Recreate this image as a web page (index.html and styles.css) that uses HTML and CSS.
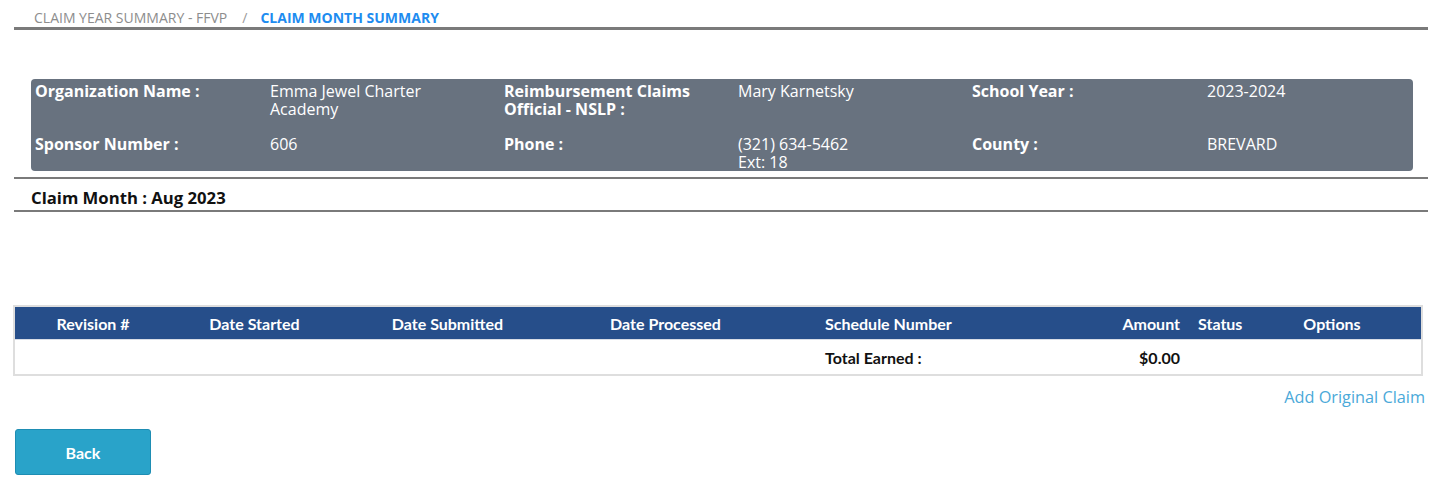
FILE: index.html
```html
<!DOCTYPE html>
<html lang="en">
<head>
<meta charset="utf-8">
<title>Claim Month Summary</title>
<link rel="stylesheet" href="styles.css">
</head>
<body>
<div class="page">
  <nav class="crumbs">
    <a class="crumb" href="#">CLAIM YEAR SUMMARY - FFVP</a>
    <span class="sep">/</span>
    <span class="crumb current">CLAIM MONTH SUMMARY</span>
  </nav>

  <section class="info">
    <div class="info-row">
      <div class="lbl">Organization Name :</div>
      <div class="val">Emma Jewel Charter Academy</div>
      <div class="lbl">Reimbursement Claims Official - NSLP :</div>
      <div class="val">Mary Karnetsky</div>
      <div class="lbl">School Year :</div>
      <div class="val">2023-2024</div>
    </div>
    <div class="info-row">
      <div class="lbl">Sponsor Number :</div>
      <div class="val">606</div>
      <div class="lbl">Phone :</div>
      <div class="val"><div>(321) 634-5462</div><div>Ext: 18</div></div>
      <div class="lbl">County :</div>
      <div class="val">BREVARD</div>
    </div>
  </section>

  <div class="month">Claim Month : Aug 2023</div>

  <div class="table">
    <div class="thead">
      <div class="c c1">Revision #</div>
      <div class="c c2">Date Started</div>
      <div class="c c3">Date Submitted</div>
      <div class="c c4">Date Processed</div>
      <div class="c c5">Schedule Number</div>
      <div class="c c6">Amount</div>
      <div class="c c7">Status</div>
      <div class="c c8">Options</div>
    </div>
    <div class="trow">
      <div class="c c1"></div>
      <div class="c c2"></div>
      <div class="c c3"></div>
      <div class="c c4"></div>
      <div class="c c5">Total Earned :</div>
      <div class="c c6">$0.00</div>
      <div class="c c7"></div>
      <div class="c c8"></div>
    </div>
  </div>

  <div class="actions">
    <a class="add-link" href="#">Add Original Claim</a>
  </div>

  <button class="back" type="button">Back</button>
</div>
</body>
</html>
```

FILE: styles.css
```css
html, body {
  margin: 0;
  padding: 0;
  background: #ffffff;
}

body {
  font-family: "Open Sans", "Liberation Sans", sans-serif;
  font-size: 16px;
  color: #111;
}

.page {
  padding: 0 12px 0 14px;
}

.crumbs {
  display: flex;
  align-items: center;
  padding: 8px 0 0 20px;
  height: 19px;
  font-size: 14px;
  line-height: 19px;
  border-bottom: 3px solid #7a7a7a;
}

.crumb {
  color: #8d8d8d;
  text-decoration: none;
}

.sep {
  color: #9a9a9a;
  margin: 0 13px 0 15px;
}

.crumb.current {
  color: #1e8cf0;
  font-weight: 700;
}

.info {
  margin: 49px 15px 0 17px;
  background: #68727f;
  border-radius: 4px;
  padding: 3px 4px 0 4px;
  color: #ffffff;
  display: flex;
  flex-direction: column;
  gap: 17px;
  line-height: 18px;
}

.info-row {
  display: grid;
  grid-template-columns: 235px 234px 234px 234px 235px 1fr;
}

.lbl {
  font-weight: 700;
  padding-right: 30px;
}

.val {
  padding-right: 30px;
}

.month {
  margin-top: 6px;
  border-top: 2px solid #7a7a7a;
  border-bottom: 2px solid #7a7a7a;
  padding: 9px 0 2px 17px;
  line-height: 20px;
  font-size: 16.7px;
  font-weight: 700;
  color: #111;
}

.table {
  margin: 93px 5px 0 -1px;
  border: 2px solid #dedede;
  font-family: Lato, "Open Sans", sans-serif;
  font-weight: 700;
  font-size: 16px;
}

.thead, .trow {
  display: grid;
  grid-template-columns: 156px 167px 219px 217px 286px 128px 55px 1fr;
}

.thead {
  background: #264e8a;
  color: #ffffff;
  height: 32px;
  align-items: center;
}

.trow {
  height: 34px;
  align-items: center;
  color: #111;
  border-top: 1px solid #d8dde6;
}

.c {
  white-space: nowrap;
}

.c1, .c2, .c3, .c4, .c8 {
  text-align: center;
}

.c5 {
  padding-left: 51px;
}

.c6 {
  text-align: right;
  padding-right: 8px;
}

.c7 {
  padding-left: 10px;
}

.actions {
  display: flex;
  justify-content: flex-end;
  padding: 10px 3px 0 0;
  line-height: 22px;
}

.add-link {
  color: #4aa9d9;
  text-decoration: none;
  font-size: 16.3px;
}

.back {
  display: block;
  margin: 21px 0 0 1px;
  width: 136px;
  height: 46px;
  background: #29a3c9;
  border: 1px solid #1e8db3;
  border-radius: 3px;
  color: #ffffff;
  font-family: Lato, "Open Sans", sans-serif;
  font-weight: 700;
  font-size: 16px;
  cursor: pointer;
}
```
